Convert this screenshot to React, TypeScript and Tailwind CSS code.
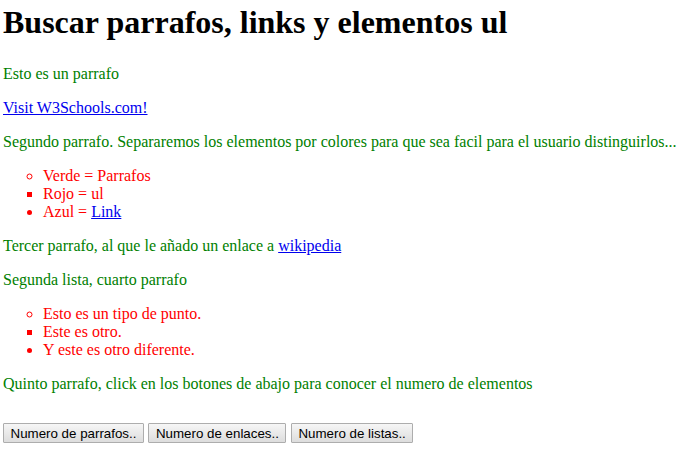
import React from "react";

const serif = { fontFamily: '"Liberation Serif", "Times New Roman", serif' };

function Btn({ children }: { children: React.ReactNode }) {
  return (
    <button
      className="h-[20px] px-[6.5px] border border-[#adadad] bg-gradient-to-b from-[#f6f6f6] to-[#dddddd] text-black text-[13.33px] leading-[normal] font-['Liberation_Sans',Arial,sans-serif] rounded-[1px]"
    >
      {children}
    </button>
  );
}

export default function App() {
  return (
    <div className="bg-white w-[695px] h-[469px] overflow-hidden pl-[3px] pt-[4px] text-[16px] leading-[18px]" style={serif}>
      <h1 className="text-[32px] font-bold leading-[37px] mb-[24px] text-black">
        Buscar parrafos, links y elementos ul
      </h1>
      <p className="text-[#008000] my-4">Esto es un parrafo</p>
      <p className="my-4">
        <a href="#" className="text-[#0000ee] underline">Visit W3Schools.com!</a>
      </p>
      <p className="text-[#008000] my-4">
        Segundo parrafo. Separaremos los elementos por colores para que sea facil para el usuario distinguirlos...
      </p>
      <ul className="text-[#ff0000] my-4 pl-[40px]">
        <li className="list-[circle]">Verde = Parrafos</li>
        <li className="list-[square]">Rojo = ul</li>
        <li className="list-disc">
          Azul = <a href="#" className="text-[#0000ee] underline">Link</a>
        </li>
      </ul>
      <p className="text-[#008000] my-4">
        Tercer parrafo, al que le añado un enlace a{" "}
        <a href="#" className="text-[#0000ee] underline">wikipedia</a>
      </p>
      <p className="text-[#008000] my-4">Segunda lista, cuarto parrafo</p>
      <ul className="text-[#ff0000] my-4 pl-[40px]">
        <li className="list-[circle]">Esto es un tipo de punto.</li>
        <li className="list-[square]">Este es otro.</li>
        <li className="list-disc">Y este es otro diferente.</li>
      </ul>
      <p className="text-[#008000] my-4">
        Quinto parrafo, click en los botones de abajo para conocer el numero de elementos
      </p>
      <div className="flex gap-[4.5px] mt-[30px]">
        <Btn>Numero de parrafos..</Btn>
        <Btn>Numero de enlaces..</Btn>
        <Btn>Numero de listas..</Btn>
      </div>
    </div>
  );
}
